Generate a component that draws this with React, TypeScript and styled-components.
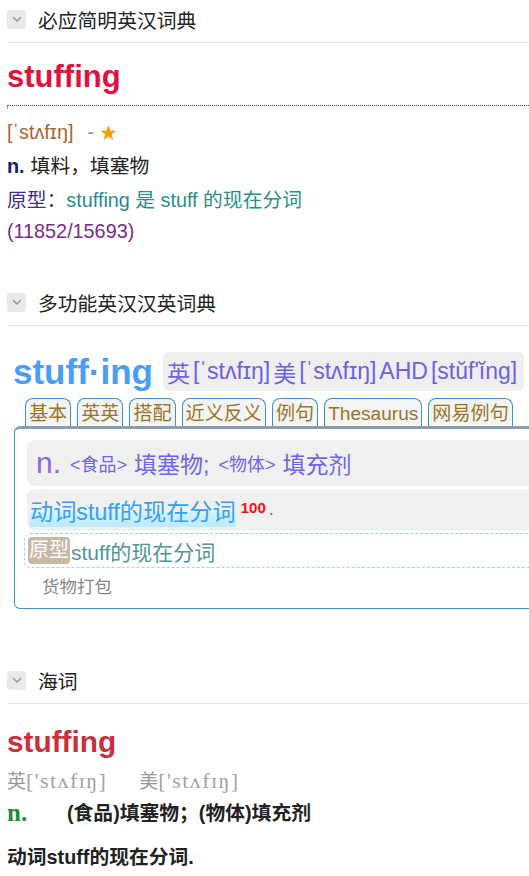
import React from 'react'
import styled, { createGlobalStyle } from 'styled-components'

const GlobalStyle = createGlobalStyle`
  html, body {
    margin: 0;
    padding: 0;
    background: #ffffff;
    overflow-x: hidden;
  }
  body {
    font-family: 'Liberation Sans', 'Noto Sans CJK SC', sans-serif;
    color: #222;
  }
`;

const Page = styled.div`
  padding: 0 0 20px 7px;
  width: 522px;
`;

const SectionHeader = styled.div<{ $top?: number }>`
  display: flex;
  align-items: center;
  gap: 12px;
  height: 38px;
  padding-bottom: 4px;
  margin-top: ${p => p.$top ?? 0}px;
  border-bottom: 1px solid #e6e6e6;
`;

const Toggle = styled.span`
  width: 19px;
  height: 19px;
  border-radius: 3px;
  background: #e9e9e9;
  display: flex;
  align-items: center;
  justify-content: center;
`;

const SectionTitle = styled.span`
  font-size: 19.8px;
  color: #222;
`;

/* ---------- bing ---------- */

const BingWord = styled.div`
  margin-top: 16px;
  font-size: 31px;
  line-height: 36px;
  font-weight: 700;
  color: #e2103e;
  padding-bottom: 10px;
  border-bottom: 1px dotted #e2103e;
  position: relative;

  &::after {
    content: '';
    position: absolute;
    left: 0;
    bottom: -4px;
    width: 1px;
    height: 3px;
    background: #999;
  }
`;

const BingLines = styled.div`
  margin-top: 9px;
`;

const Line = styled.div<{ $h?: number }>`
  height: ${p => p.$h ?? 34}px;
  line-height: ${p => p.$h ?? 34}px;
  font-size: 19.8px;
  white-space: nowrap;
`;

const Phon = styled.span`
  color: #a86432;
`;

const Dash = styled.span`
  color: #888;
  margin-left: 14px;
`;

const Star = styled.span`
  color: #f5a000;
  font-size: 17px;
  margin-left: 6px;
`;

const Pos = styled.b`
  color: #1a1a66;
  margin-right: 6px;
`;

const Label = styled.span`
  color: #3a2f8a;
`;

const Teal = styled.span`
  color: #2a8c8c;
`;

const Freq = styled.span`
  color: #7a2a88;
`;

/* ---------- multi-function ---------- */

const HeadRow = styled.div`
  margin-top: 26px;
  display: flex;
  align-items: center;
  gap: 10px;
  padding-left: 6px;
  height: 39px;
  white-space: nowrap;
`;

const BigWord = styled.span`
  font-size: 35px;
  font-weight: 700;
  color: #4a9ef8;
`;

const PhonBox = styled.span`
  background: #efefef;
  border-radius: 6px;
  height: 39px;
  display: flex;
  align-items: center;
  padding: 0 4px;
  font-size: 23px;
  color: #6b62e6;
`;

const PhonPart = styled.span`
  margin-right: 3px;
`;

const Tabs = styled.div`
  margin-top: 7px;
  display: flex;
  gap: 6px;
  padding-left: 18px;
  height: 28px;
`;

const Tab = styled.span`
  height: 28px;
  box-sizing: border-box;
  padding: 0 3px;
  border: 1px solid #3a92d2;
  border-bottom: none;
  border-radius: 8px 8px 0 0;
  background: #f4f4f4;
  color: #9a7426;
  font-size: 19.1px;
  line-height: 30px;
  white-space: nowrap;
`;

const Card = styled.div`
  margin-left: 7px;
  width: 540px;
  box-sizing: border-box;
  border: 1.5px solid #3c97d3;
  border-top: 3px solid #8c9cae;
  border-radius: 6px;
  padding: 11px 0 9px 9px;
  display: flex;
  flex-direction: column;
  gap: 3px;
`;

const GrayRow = styled.div<{ $h: number; $pad: number }>`
  margin-left: 3px;
  height: ${p => p.$h}px;
  background: #f0f0f0;
  border-radius: 8px;
  display: flex;
  align-items: center;
  padding-left: ${p => p.$pad}px;
  white-space: nowrap;
  color: #6d66e6;
`;

const DefPos = styled.span`
  font-size: 30px;
  color: #8d6ad8;
  margin-right: 9px;
`;

const Tag = styled.span`
  font-size: 18px;
  margin-right: 7px;
`;

const DefText = styled.span`
  font-size: 23px;
  margin-right: 9px;
`;

const Verb = styled.span`
  font-size: 23.2px;
  color: #38a0f0;
  background: linear-gradient(to bottom, transparent 55%, #d2f2ff 55%, #bfe9ff 100%);
`;

const Sup = styled.sup`
  color: #ee1111;
  font-weight: 700;
  font-size: 15px;
  margin-left: 5px;
  position: relative;
  top: -2px;
`;

const Dot = styled.span`
  color: #6d66e6;
  font-size: 18px;
  margin-left: 3px;
`;

const DashedRow = styled.div`
  height: 35px;
  box-sizing: border-box;
  border: 1px dashed #9ad6f2;
  border-radius: 6px;
  display: flex;
  align-items: center;
  padding-left: 3px;
  white-space: nowrap;
`;

const OrigTag = styled.span`
  background: #c9b8a5;
  color: #fff;
  font-size: 20px;
  border-radius: 4px;
  padding: 0 1px;
  line-height: 27px;
  margin-right: 1px;
`;

const OrigText = styled.span`
  color: #4f9696;
  font-size: 21px;
`;

const Note = styled.div`
  padding-left: 18px;
  margin-top: 4px;
  height: 24px;
  line-height: 24px;
  font-size: 17.5px;
  color: #888;
`;

/* ---------- haici ---------- */

const HaiciWord = styled.div`
  margin-top: 20px;
  font-size: 29.8px;
  line-height: 36px;
  font-weight: 700;
  color: #c8303c;
`;

const HaiciPhonLine = styled.div`
  margin-top: 6px;
  height: 30px;
  line-height: 30px;
  display: flex;
  gap: 32px;
  white-space: nowrap;
`;

const Accent = styled.span`
  font-size: 19px;
  color: #999;
`;

const SerifPhon = styled.span`
  font-family: 'Liberation Serif', 'DejaVu Serif', serif;
  font-size: 22px;
  letter-spacing: 1.4px;
  color: #a4a4a4;
`;

const HaiciDefLine = styled.div<{ $top: number }>`
  margin-top: ${p => p.$top}px;
  height: 30px;
  line-height: 30px;
  display: flex;
  font-size: 19.8px;
  font-weight: 700;
  color: #222;
  white-space: nowrap;
`;

const GreenPos = styled.span`
  width: 60px;
  font-family: 'Liberation Serif', 'DejaVu Serif', serif;
  font-size: 25px;
  color: #218a3a;
`;

const Chevron = () => (
  <svg width="12" height="12" viewBox="0 0 12 12">
    <path d="M2.5 4.5 L6 8 L9.5 4.5" fill="none" stroke="#9a9a9a" strokeWidth="1.6" strokeLinecap="round" strokeLinejoin="round" />
  </svg>
);

const Header = ({ title, top }: { title: string; top?: number }) => (
  <SectionHeader $top={top}>
    <Toggle><Chevron /></Toggle>
    <SectionTitle>{title}</SectionTitle>
  </SectionHeader>
);

const tabs = ['基本', '英英', '搭配', '近义反义', '例句', 'Thesaurus', '网易例句'];

export default function App() {
  return (
    <>
      <GlobalStyle />
      <Page>
        <Header title="必应简明英汉词典" />
        <BingWord>stuffing</BingWord>
        <BingLines>
          <Line>
            <Phon>[ˈstʌfɪŋ]</Phon>
            <Dash>-</Dash>
            <Star>★</Star>
          </Line>
          <Line>
            <Pos>n.</Pos>填料，填塞物
          </Line>
          <Line>
            <Label>原型：</Label>
            <Teal>stuffing 是 stuff 的现在分词</Teal>
          </Line>
          <Line $h={28}>
            <Freq>(11852/15693)</Freq>
          </Line>
        </BingLines>

        <Header title="多功能英汉汉英词典" top={38} />
        <HeadRow>
          <BigWord>stuff·ing</BigWord>
          <PhonBox>
            <PhonPart>英</PhonPart>
            <PhonPart>[ˈstʌfɪŋ]</PhonPart>
            <PhonPart>美</PhonPart>
            <PhonPart>[ˈstʌfɪŋ]</PhonPart>
            <PhonPart>AHD</PhonPart>
            <PhonPart>[stŭf'ĭng]</PhonPart>
          </PhonBox>
        </HeadRow>
        <Tabs>
          {tabs.map(t => <Tab key={t}>{t}</Tab>)}
        </Tabs>
        <Card>
          <GrayRow $h={46} $pad={9}>
            <DefPos>n.</DefPos>
            <Tag>&lt;食品&gt;</Tag>
            <DefText>填塞物;</DefText>
            <Tag>&lt;物体&gt;</Tag>
            <DefText>填充剂</DefText>
          </GrayRow>
          <GrayRow $h={41} $pad={3}>
            <Verb>动词stuff的现在分词</Verb>
            <Sup>100</Sup>
            <Dot>.</Dot>
          </GrayRow>
          <DashedRow>
            <OrigTag>原型</OrigTag>
            <OrigText>stuff的现在分词</OrigText>
          </DashedRow>
          <Note>货物打包</Note>
        </Card>

        <Header title="海词" top={52} />
        <HaiciWord>stuffing</HaiciWord>
        <HaiciPhonLine>
          <span>
            <Accent>英</Accent>
            <SerifPhon>['stʌfɪŋ]</SerifPhon>
          </span>
          <span>
            <Accent>美</Accent>
            <SerifPhon>['stʌfɪŋ]</SerifPhon>
          </span>
        </HaiciPhonLine>
        <HaiciDefLine $top={2}>
          <GreenPos>n.</GreenPos>
          <span>(食品)填塞物；(物体)填充剂</span>
        </HaiciDefLine>
        <HaiciDefLine $top={14}>
          动词stuff的现在分词.
        </HaiciDefLine>
      </Page>
    </>
  );
}
